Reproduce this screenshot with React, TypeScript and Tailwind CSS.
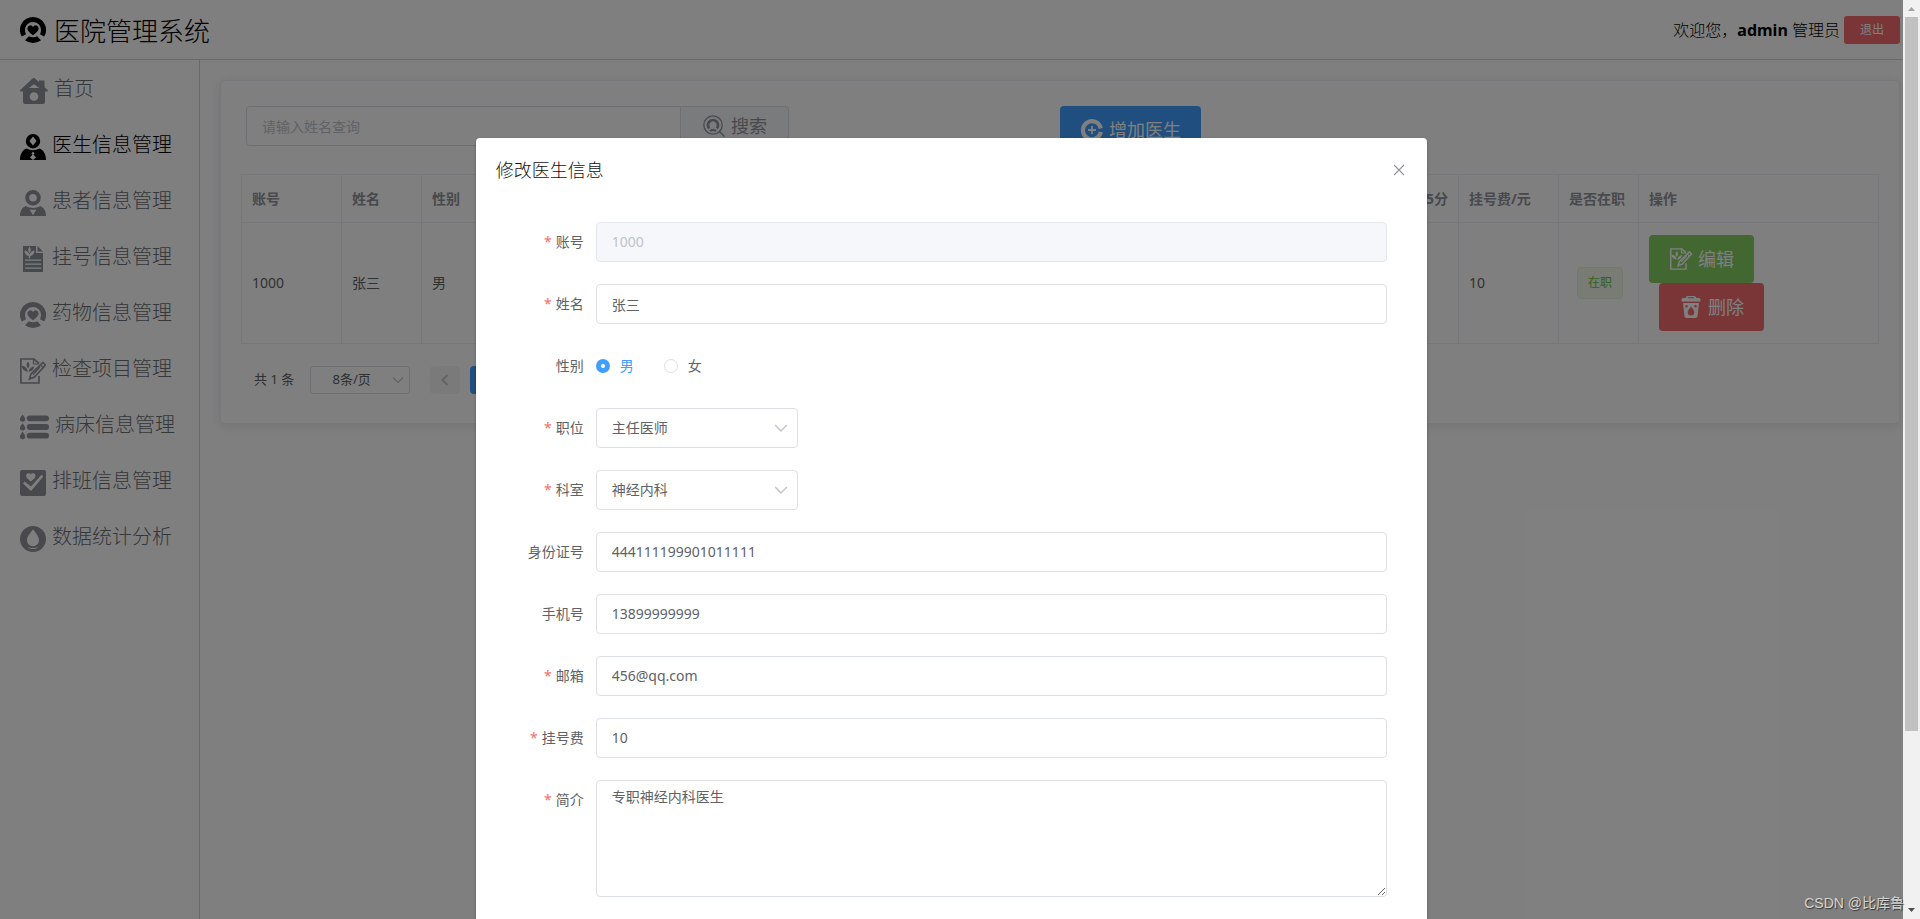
import type { ReactNode } from "react";

type IconProps = { className?: string };

function HeartBadgeIcon({ className }: IconProps) {
  return (
    <svg viewBox="0 0 26 26" className={className} fill="currentColor" aria-hidden="true">
      <path d="M13 0a13 13 0 0 1 11.200 19.600L20 17.200A8 8 0 0 0 21 13 8 8 0 0 0 5 13a8 8 0 0 0 1 4.200L1.800 19.600A13 13 0 0 1 13 0z" />
      <path d="M13 18.200c-4-3-5.600-4.800-5.600-6.800a3 3 0 0 1 5.600-1.500 3 3 0 0 1 5.600 1.500c0 2-1.600 3.800-5.600 6.800z" />
      <path d="M5 23.200 8.800 19.200Q13 21.400 17.200 19.200L21 23.200A13 13 0 0 1 5 23.200z" />
    </svg>
  );
}

function HomeIcon({ className }: IconProps) {
  return (
    <svg viewBox="0 0 28 26" className={className} fill="currentColor" aria-hidden="true">
      <path
        fillRule="evenodd"
        d="M13.500 0a1.500 1.500 0 0 1 1.500.4L19 4V2.500h5.500V9l3.200 3.200c.5.7.2 1.300-.7 1.300H25V24a2 2 0 0 1-2 2H5a2 2 0 0 1-2-2V13.500H1c-.9 0-1.300-.8-.7-1.400L12.500.5a1.500 1.500 0 0 1 1-.5zM14 14.200a4.300 4.300 0 1 0 0 8.600 4.300 4.300 0 0 0 0-8.600zM14 6.300 8.700 10h10.600z"
      />
    </svg>
  );
}

function DoctorIcon({ className }: IconProps) {
  return (
    <svg viewBox="0 0 26 26" className={className} fill="currentColor" aria-hidden="true">
      <path fillRule="evenodd" d="M13 0a7.200 7.200 0 1 1 0 14.400A7.200 7.200 0 0 1 13 0zm0 2.600-3.600 4.500L13 11.600l3.600-4.500z" />
      <path
        fillRule="evenodd"
        d="M6.500 14.500Q13 18 19.500 14.500C24 16.500 26 20.500 26 26H0C0 20.500 2 16.500 6.500 14.500zM13 17.600l-1.500 1.800 1 1.200-2.500 3L13 26l3-2.400-2.500-3 1-1.200z"
      />
    </svg>
  );
}

function PatientIcon({ className }: IconProps) {
  return (
    <svg viewBox="0 0 26 26" className={className} fill="currentColor" aria-hidden="true">
      <path fillRule="evenodd" d="M13 0a7.800 7.800 0 1 1 0 15.600A7.800 7.800 0 0 1 13 0zm0 4a3.800 3.800 0 1 0 0 7.600A3.800 3.800 0 0 0 13 4z" />
      <path fillRule="evenodd" d="M5.500 16Q13 20 20.500 16C24.500 18.200 26 21.500 26 26H0c0-4.500 1.500-7.800 5.500-10zM9.500 19.200 13 25.200l3.500-6Q13 20.200 9.500 19.200z" />
    </svg>
  );
}

function RecordIcon({ className }: IconProps) {
  return (
    <svg viewBox="0 0 26 26" className={className} fill="currentColor" aria-hidden="true">
      <path
        fillRule="evenodd"
        d="M3 0h13v7h7v19H3zM9.500.8C7.800 2.800 7.800 5 9.500 7c1.700-2 1.700-4.200 0-6.200zM4.500 4.500c0 3 1.500 5 4.300 5.500v2.200h1.400V10c2.800-.5 4.300-2.500 4.300-5.500-2 .2-3.800 1.500-5 3.800-1.200-2.300-3-3.600-5-3.800zM5 13.500v1.300h16v-1.300zm0 4v1.300h16v-1.300zm0 4v1.300h16v-1.300z"
      />
      <path d="M17.500 0 23 5.500h-5.500z" />
    </svg>
  );
}

function EditDocIcon({ className }: IconProps) {
  return (
    <svg viewBox="0 0 26 26" className={className} fill="none" stroke="currentColor" strokeWidth="1.700" aria-hidden="true">
      <path d="M19 18v7H.9V1H14l5 4.500" />
      <path d="M13.500 1v5H19" strokeWidth="1.200" />
      <path d="M8 3.500c-1.900 2-1.900 5 0 7 1.900-2 1.900-5 0-7zM1.800 7.800c.3 3.400 2.200 5.600 6 6C7.500 10.400 5.200 8.100 1.800 7.800zM14.300 8.300c-3.300.5-5.500 2.800-5.700 5.500 3-.2 5.200-2.200 5.700-5.500z" fill="currentColor" stroke="none" />
      <path d="M23 4.500 25.500 7 14.500 19 9.500 21 11 16z" />
      <path d="m20.500 7 2.500 2.500M13 16.500l7-7.500" strokeWidth="1.200" />
    </svg>
  );
}

function BedListIcon({ className }: IconProps) {
  return (
    <svg viewBox="0 0 30 26" className={className} fill="currentColor" aria-hidden="true">
      {[0, 9, 18].map((y) => (
        <g key={y}>
          <rect x="7" y={y + 1} width="23" height="6" rx="3" />
          <path d={`M2.700 ${y}C4 ${y + 2} 5.400 ${y + 3} 5.400 ${y + 5}a2.700 2.600 0 0 1-5.400 0C0 ${y + 3} 1.400 ${y + 2} 2.700 ${y}z`} />
        </g>
      ))}
    </svg>
  );
}

function ScheduleIcon({ className }: IconProps) {
  return (
    <svg viewBox="0 0 26 26" className={className} aria-hidden="true">
      <path
        fill="currentColor"
        fillRule="evenodd"
        d="M2 0h22a2 2 0 0 1 2 2v22a2 2 0 0 1-2 2H2a2 2 0 0 1-2-2V2a2 2 0 0 1 2-2zM4.500 11.500 3 13.500l8 7.500L23.300 6.500 21.500 4.800 11 16.500zM10.800 11.500c3.200-2.300 4.700-3.900 4.700-5.700a2.500 2.500 0 0 0-4.700-1.200 2.500 2.500 0 0 0-4.700 1.200c0 1.800 1.500 3.400 4.700 5.700z"
      />
    </svg>
  );
}

function DropIcon({ className }: IconProps) {
  return (
    <svg viewBox="0 0 26 26" className={className} fill="currentColor" aria-hidden="true">
      <path
        fillRule="evenodd"
        d="M13 0a13 13 0 1 1 0 26 13 13 0 0 1 0-26zm0 3.300C9.500 8.200 7 11 7 14.300a6 6 0 0 0 12 0c0-3.300-2.500-6.100-6-11zM7.500 21.200C10.500 23.600 15.500 23.600 18.500 21.200 15.500 22.200 10.500 22.200 7.500 21.200z"
      />
    </svg>
  );
}

function SearchIcon({ className }: IconProps) {
  return (
    <svg viewBox="0 0 22 22" className={className} fill="none" stroke="currentColor" aria-hidden="true">
      <circle cx="10" cy="10" r="9.200" strokeWidth="1.300" />
      <path d="M6.200 13.300A5 5 0 1 1 13.800 13.300" strokeWidth="2.800" />
      <path d="M6.800 15.800Q10 14.300 13.200 15.800" strokeWidth="2" />
      <path d="M16.500 16.500 21.500 21.500" strokeWidth="1.500" />
    </svg>
  );
}

function AddIcon({ className }: IconProps) {
  return (
    <svg viewBox="0 0 22 22" className={className} fill="none" stroke="currentColor" aria-hidden="true">
      <path d="M19.800 9.500A9 9 0 1 0 19.800 12.900" strokeWidth="4.200" />
      <path d="M11 7v8M7 11h8" strokeWidth="1.800" />
    </svg>
  );
}

function TrashIcon({ className }: IconProps) {
  return (
    <svg viewBox="0 0 22 22" className={className} fill="currentColor" aria-hidden="true">
      <path fillRule="evenodd" d="M7 0h8l1.500 2H19a1.500 1.500 0 0 1 1.500 1.500v2h-19v-2A1.500 1.500 0 0 1 3 2h2.500zM8 1.300 7.500 2.200h7L14 1.300z" />
      <path
        fillRule="evenodd"
        d="M3 7h16l-1.500 13.500a2 2 0 0 1-2 1.500h-9a2 2 0 0 1-2-1.500zM11 10.500c-2 2.600-3.300 4-3.300 5.800a3.300 3.300 0 0 0 6.600 0c0-1.800-1.300-3.200-3.300-5.800zM6.500 9a1.300 1.300 0 1 0 0 2.600 1.300 1.300 0 0 0 0-2.600zm9 0a1.300 1.300 0 1 0 0 2.600 1.300 1.300 0 0 0 0-2.600z"
      />
    </svg>
  );
}

function ChevronDown({ className }: IconProps) {
  return (
    <svg viewBox="0 0 12 12" className={className} fill="none" stroke="currentColor" strokeWidth="1.200" aria-hidden="true">
      <path d="M1 3.500 6 8.500 11 3.500" />
    </svg>
  );
}

const menu = [
  { label: "首页", Icon: HomeIcon, size: "w-7" },
  { label: "医生信息管理", Icon: DoctorIcon, size: "w-[26px]", active: true },
  { label: "患者信息管理", Icon: PatientIcon, size: "w-[26px]" },
  { label: "挂号信息管理", Icon: RecordIcon, size: "w-[26px]" },
  { label: "药物信息管理", Icon: HeartBadgeIcon, size: "w-[26px]" },
  { label: "检查项目管理", Icon: EditDocIcon, size: "w-[26px]" },
  { label: "病床信息管理", Icon: BedListIcon, size: "w-[29px]" },
  { label: "排班信息管理", Icon: ScheduleIcon, size: "w-[26px]" },
  { label: "数据统计分析", Icon: DropIcon, size: "w-[26px]" },
];

function Header() {
  return (
    <header className="flex h-[60px] shrink-0 items-center justify-between border-b border-[#d3d3d3] pr-[3px] pl-5">
      <div className="flex items-center gap-2">
        <HeartBadgeIcon className="h-[26px] w-[26px]" />
        <h1 className="pt-0.5 text-[26px] leading-8 font-light">医院管理系统</h1>
      </div>
      <div className="flex items-center gap-1">
        <span className="text-base font-light">
          欢迎您，<b className="font-bold">admin</b> 管理员
        </span>
        <button className="h-7 rounded-[3px] bg-[#f56c6c] px-4 text-xs text-white">退出</button>
      </div>
    </header>
  );
}

function Sidebar() {
  return (
    <nav className="w-[200px] shrink-0 border-r border-[#d3d3d3]">
      <ul>
        {menu.map(({ label, Icon, size, active }) => (
          <li key={label}>
            <a
              href="#"
              className={`flex h-14 items-center gap-1.5 pl-5 text-xl font-light ${active ? "text-black" : "text-[#909399]"}`}
            >
              <Icon className={`mt-1.5 h-[26px] shrink-0 ${size}`} />
              <span className={`pt-0.5 whitespace-nowrap ${active ? "text-black" : "text-[#6b6e73]"}`}>{label}</span>
            </a>
          </li>
        ))}
      </ul>
    </nav>
  );
}

const headCell = "h-12 border border-[#ebeef5] px-2.5 text-left font-bold text-[#909399]";
const bodyCell = "h-[121px] border border-[#ebeef5] px-2.5";

function DoctorTable() {
  return (
    <table className="w-full table-fixed border-collapse text-sm">
      <colgroup>
        <col className="w-[100px]" />
        <col className="w-20" />
        <col className="w-20" />
        <col />
        <col className="w-[100px]" />
        <col className="w-[100px]" />
        <col className="w-20" />
        <col className="w-60" />
      </colgroup>
      <thead>
        <tr>
          <th className={headCell}>账号</th>
          <th className={headCell}>姓名</th>
          <th className={headCell}>性别</th>
          <th className={headCell} aria-label="简介" />
          <th className={`${headCell} text-right`}>评分/5分</th>
          <th className={headCell}>挂号费/元</th>
          <th className={headCell}>是否在职</th>
          <th className={headCell}>操作</th>
        </tr>
      </thead>
      <tbody>
        <tr>
          <td className={bodyCell}>1000</td>
          <td className={bodyCell}>张三</td>
          <td className={bodyCell}>男</td>
          <td className={bodyCell} />
          <td className={bodyCell} />
          <td className={bodyCell}>10</td>
          <td className={bodyCell}>
            <span className="ml-2 inline-block h-8 rounded border border-[#e1f3d8] bg-[#f0f9eb] px-2.5 text-xs leading-[30px] text-[#67c23a]">
              在职
            </span>
          </td>
          <td className={bodyCell}>
            <div className="flex flex-col items-start">
              <button className="flex h-12 items-center gap-[5px] rounded bg-[#85ce61] px-5 text-lg text-white">
                <EditDocIcon className="h-[22px] w-6" />
                编辑
              </button>
              <button className="ml-2.5 flex h-12 items-center gap-[5px] rounded bg-[#f56c6c] px-5 text-lg text-white">
                <TrashIcon className="h-[22px] w-6" />
                删除
              </button>
            </div>
          </td>
        </tr>
      </tbody>
    </table>
  );
}

function DoctorPanel() {
  return (
    <main className="min-w-0 flex-1 pt-5 pr-[3px] pl-5">
      <section className="rounded border border-[#ebeef5] bg-white px-5 pt-[25px] pb-[29px] text-[#606266] shadow-[0_2px_12px_rgba(0,0,0,0.1)]">
        <div className="grid h-[68px] grid-cols-2 items-start">
          <div className="flex h-10 w-[548px] pl-[5px]">
            <input
              aria-label="姓名"
              placeholder="请输入姓名查询"
              className="h-10 min-w-0 flex-1 rounded-l border border-[#dcdfe6] px-[15px] text-sm placeholder:text-[#c0c4cc]"
            />
            <button className="flex h-10 w-[108px] items-center justify-center gap-[5px] rounded-r border border-l-0 border-[#dcdfe6] bg-[#f5f7fa] text-lg text-[#909399]">
              <SearchIcon className="h-[22px] w-6" />
              搜索
            </button>
          </div>
          <button className="flex h-12 w-fit items-center gap-[5px] justify-self-start rounded bg-[#409eff] px-5 text-lg text-white">
            <AddIcon className="h-[22px] w-6" />
            增加医生
          </button>
        </div>
        <DoctorTable />
        <div className="mt-[22px] flex h-7 items-center pl-[13px] text-[13px]">
          <span className="mr-4">共 1 条</span>
          <div className="relative mr-5">
            <select
              aria-label="每页条数"
              className="h-7 w-[100px] appearance-none rounded-[3px] border border-[#dcdfe6] bg-white pr-[17px] text-center text-[13px]"
            >
              <option>8条/页</option>
            </select>
            <ChevronDown className="pointer-events-none absolute top-2 right-1.5 h-3 w-3 text-[#c0c4cc]" />
          </div>
          <button aria-label="上一页" disabled className="mr-2.5 flex h-7 w-[30px] items-center justify-center rounded-sm bg-[#f4f4f5] text-[#c0c4cc]">
            <ChevronDown className="h-3 w-3 rotate-90 stroke-2" />
          </button>
          <button className="h-7 w-[30px] rounded-sm bg-[#409eff] font-bold text-white">1</button>
        </div>
      </section>
    </main>
  );
}

const fieldBox = "w-full rounded border px-[15px] text-sm";
const openBox = "border-[#dcdfe6] bg-white text-[#606266]";

function Field({ id, label, required, children }: { id?: string; label: string; required?: boolean; children: ReactNode }) {
  return (
    <div className="flex items-start">
      <label htmlFor={id} className="w-[100px] shrink-0 pr-3 text-right text-sm leading-10 text-[#606266]">
        {required && <span className="mr-1 text-[#f56c6c]">*</span>}
        {label}
      </label>
      <div className="flex min-h-10 min-w-0 flex-1 items-center">{children}</div>
    </div>
  );
}

function TextField({ id, label, value, required, disabled }: { id: string; label: string; value: string; required?: boolean; disabled?: boolean }) {
  return (
    <Field id={id} label={label} required={required}>
      <input
        id={id}
        defaultValue={value}
        disabled={disabled}
        className={`${fieldBox} h-10 ${disabled ? "border-[#e4e7ed] bg-[#f5f7fa] text-[#c0c4cc]" : openBox}`}
      />
    </Field>
  );
}

function SelectField({ id, label, value }: { id: string; label: string; value: string }) {
  return (
    <Field id={id} label={label} required>
      <div className="relative w-[202px]">
        <select id={id} className={`${fieldBox} ${openBox} h-10 appearance-none`}>
          <option>{value}</option>
        </select>
        <ChevronDown className="pointer-events-none absolute top-[13px] right-2.5 h-3.5 w-3.5 text-[#c0c4cc]" />
      </div>
    </Field>
  );
}

function GenderOption({ label, checked }: { label: string; checked?: boolean }) {
  return (
    <label className={`flex items-center gap-2.5 text-sm ${checked ? "text-[#409eff]" : "text-[#606266]"}`}>
      <input
        type="radio"
        name="gender"
        defaultChecked={checked}
        className="h-3.5 w-3.5 appearance-none rounded-full border border-[#dcdfe6] bg-white checked:border-5 checked:border-[#409eff]"
      />
      {label}
    </label>
  );
}

function EditDialog() {
  return (
    <div role="dialog" aria-label="修改医生信息" className="mx-auto mt-[15vh] w-1/2 rounded-sm bg-white shadow-[0_1px_3px_rgba(0,0,0,0.3)]">
      <div className="flex items-start justify-between px-5 pt-5 pb-2.5">
        <h2 className="text-lg leading-6 font-light text-[#111214]">修改医生信息</h2>
        <button aria-label="关闭" className="flex h-6 w-4 items-center justify-center text-[#909399]">
          <svg viewBox="0 0 12 12" className="h-3 w-3" fill="none" stroke="currentColor" strokeWidth="1.100" aria-hidden="true">
            <path d="m1 1 10 10M11 1 1 11" />
          </svg>
        </button>
      </div>
      <form className="flex flex-col gap-[22px] py-[30px] pr-10 pl-5">
        <TextField id="account" label="账号" value="1000" required disabled />
        <TextField id="name" label="姓名" value="张三" required />
        <Field label="性别">
          <div className="flex gap-[30px]">
            <GenderOption label="男" checked />
            <GenderOption label="女" />
          </div>
        </Field>
        <SelectField id="post" label="职位" value="主任医师" />
        <SelectField id="department" label="科室" value="神经内科" />
        <TextField id="idcard" label="身份证号" value="444111199901011111" />
        <TextField id="phone" label="手机号" value="13899999999" />
        <TextField id="email" label="邮箱" value="456@qq.com" required />
        <TextField id="fee" label="挂号费" value="10" required />
        <Field id="intro" label="简介" required>
          <textarea id="intro" rows={5} defaultValue="专职神经内科医生" className={`${fieldBox} ${openBox} block resize-y py-[5px] leading-[21px]`} />
        </Field>
      </form>
    </div>
  );
}

function ScrollTrack() {
  return (
    <div className="flex w-[17px] shrink-0 flex-col items-center bg-[#f1f1f1]" aria-hidden="true">
      <svg viewBox="0 0 17 17" className="h-[17px] w-[17px] shrink-0">
        <path d="M5 11h7L8.500 7z" fill="#a3a3a3" />
      </svg>
      <div className="flex w-[13px] flex-1 flex-col">
        <div className="flex-[25] bg-[#c1c1c1]" />
        <div className="flex-[6]" />
      </div>
      <svg viewBox="0 0 17 17" className="h-[17px] w-[17px] shrink-0">
        <path d="M5 6h7L8.500 10z" fill="#505050" />
      </svg>
    </div>
  );
}

export default function App() {
  return (
    <div className="relative flex h-screen overflow-hidden bg-white font-['Noto_Sans','Noto_Sans_CJK_SC',sans-serif] text-black">
      <div className="relative flex min-w-0 flex-1 flex-col overflow-hidden">
        <Header />
        <div className="flex flex-1">
          <Sidebar />
          <DoctorPanel />
        </div>
        <div className="absolute inset-0 overflow-hidden bg-black/50">
          <EditDialog />
        </div>
      </div>
      <ScrollTrack />
      <span className="absolute right-4 bottom-1.5 font-['Liberation_Sans','Noto_Sans_CJK_SC',sans-serif] text-sm text-[#d4d4d4] [text-shadow:1px_1px_1px_#333]">
        CSDN @比库鲁
      </span>
    </div>
  );
}
